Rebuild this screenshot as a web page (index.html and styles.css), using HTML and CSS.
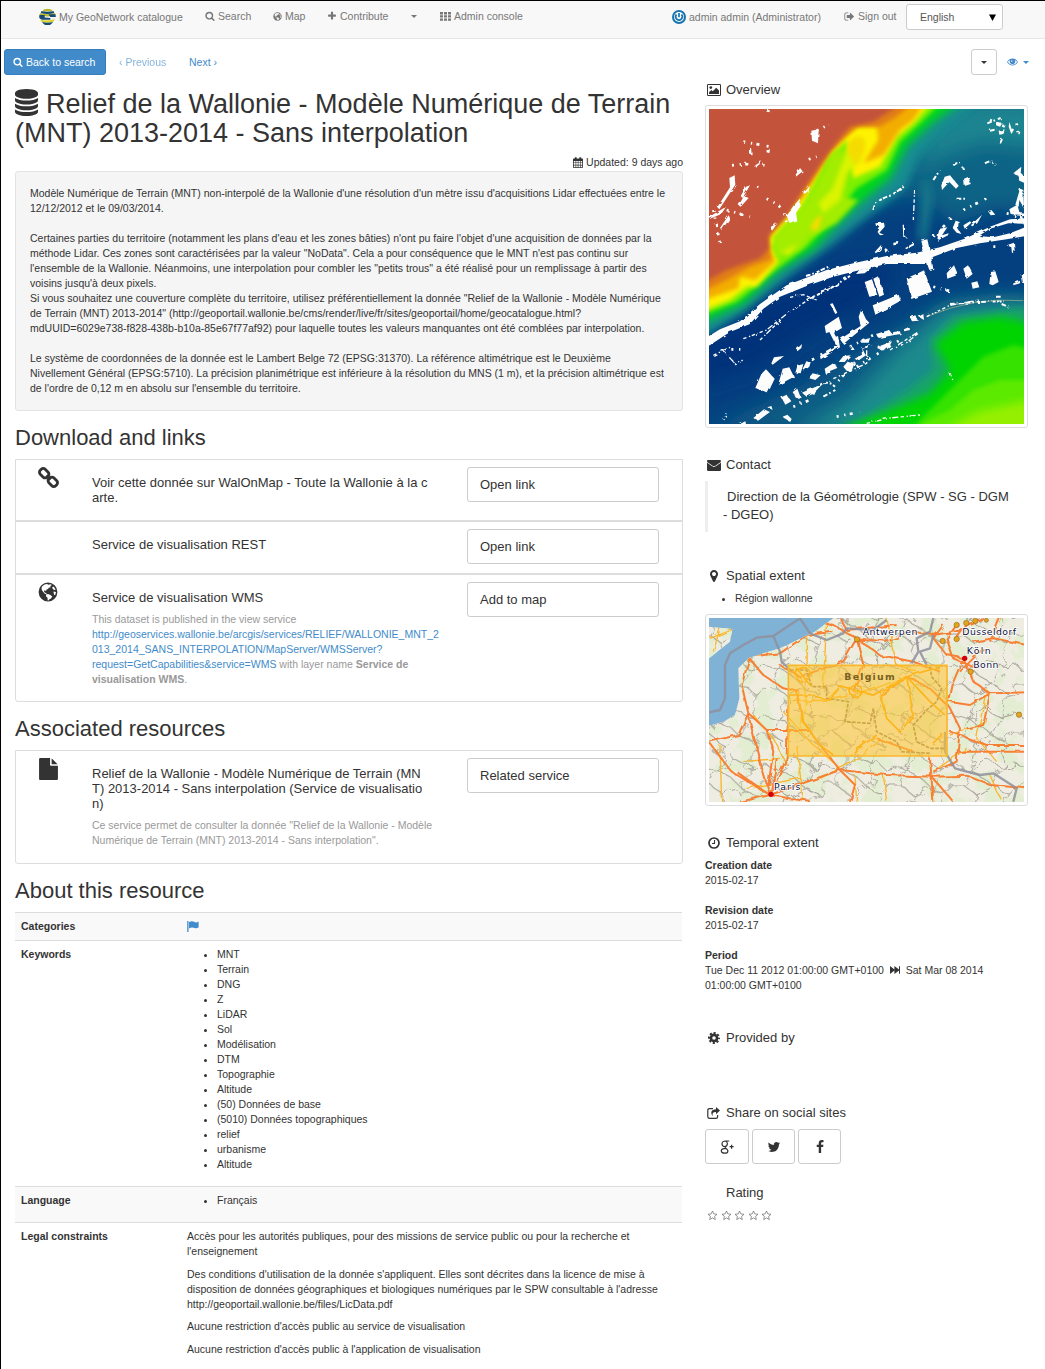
FILE: index.html
```html
<!DOCTYPE html>
<html lang="en">
<head>
<meta charset="utf-8">
<title>My GeoNetwork catalogue</title>
<link rel="stylesheet" href="styles.css">
</head>
<body>
<svg width="0" height="0" class="defs" aria-hidden="true">
  <symbol id="search" viewBox="0 0 1792 1792"><path d="M1216 832q0-185-131.500-316.500t-316.500-131.500-316.500 131.500-131.500 316.500 131.500 316.500 316.500 131.500 316.500-131.500 131.500-316.500zm512 832q0 52-38 90t-90 38q-54 0-90-38l-343-342q-179 124-399 124-143 0-273.500-55.500t-225-150-150-225-55.500-273.500 55.500-273.500 150-225 225-150 273.500-55.500 273.500 55.500 225 150 150 225 55.500 273.500q0 220-124 399l343 343q37 37 37 90z"/></symbol>
  <symbol id="plus" viewBox="0 0 1792 1792"><path d="M1600 736v192q0 40-28 68t-68 28h-416v416q0 40-28 68t-68 28h-192q-40 0-68-28t-28-68v-416h-416q-40 0-68-28t-28-68v-192q0-40 28-68t68-28h416v-416q0-40 28-68t68-28h192q40 0 68 28t28 68v416h416q40 0 68 28t28 68z"/></symbol>
  <symbol id="globe" viewBox="0 0 20 20"><path fill-rule="evenodd" d="M10 .6a9.400 9.400 0 1 0 0 18.800A9.400 9.400 0 0 0 10 .6zM9 2.100l1.500.6 2-.5 1.500.8-1.800 1 .5 1.300-2 .4-.6 1.400-1.600.3-.4 1.500-1.600-.6-.5 1.200 1 1.200 1.300.2.300 1.500 1.400-.3 2.400.8 1.900 1.500-1.300 2-1.600.9-1 1.300-.7-.2-.2-2.600-1.600-1.500.2-2-1.600-.9-2.200-2.600-.6-1.500C3.100 4.700 5.500 2.500 9 2.100zm6.600 2.300 2.100 3-1.500.5-1.300-.8-.8-1.500zm-.2 5.100 2.600.4-.7 2.900-1.200.2z"/></symbol>
  <symbol id="grid" viewBox="0 0 11 9"><path d="M0 0h3v2.400H0zM4 0h3v2.400H4zM8 0h3v2.400H8zM0 3.200h3v2.400H0zM4 3.200h3v2.400H4zM8 3.200h3v2.400H8zM0 6.400h3v2.400H0zM4 6.400h3v2.400H4zM8 6.400h3v2.400H8z"/></symbol>
  <symbol id="signout" viewBox="0 0 1792 1792"><path d="M704 1440q0 4 1 20t.5 26.500-3 23.500-10 19.500-20.500 6.500h-320q-119 0-203.500-84.500t-84.500-203.500v-704q0-119 84.500-203.500t203.500-84.500h320q13 0 22.500 9.500t9.500 22.500q0 4 1 20t.5 26.500-3 23.500-10 19.500-20.500 6.500h-320q-66 0-113 47t-47 113v704q0 66 47 113t113 47h312l11.500 1 11.500 3 8 5.500 7 9 2 13.500zm928-544q0 26-19 45l-544 544q-19 19-45 19t-45-19-19-45v-288h-448q-26 0-45-19t-19-45v-384q0-26 19-45t45-19h448v-288q0-26 19-45t45-19 45 19l544 544q19 19 19 45z"/></symbol>
  <symbol id="database" viewBox="128 0 1536 1792"><path d="M896 768q237 0 443-43t325-127v170q0 69-103 128t-280 93.500-385 34.500-385-34.500-280-93.500-103-128v-170q119 84 325 127t443 43zm0 768q237 0 443-43t325-127v170q0 69-103 128t-280 93.500-385 34.500-385-34.500-280-93.500-103-128v-170q119 84 325 127t443 43zm0-384q237 0 443-43t325-127v170q0 69-103 128t-280 93.500-385 34.500-385-34.500-280-93.500-103-128v-170q119 84 325 127t443 43zm0-1152q208 0 385 34.500t280 93.500 103 128v128q0 69-103 128t-280 93.500-385 34.500-385-34.500-280-93.500-103-128v-128q0-69 103-128t280-93.500 385-34.500z"/></symbol>
  <symbol id="file" viewBox="128 0 1536 1792"><path d="M1152 512v-472q22 14 36 28l408 408q14 14 28 36h-472zm-128 32q0 40 28 68t68 28h544v1056q0 40-28 68t-68 28h-1344q-40 0-68-28t-28-68v-1600q0-40 28-68t68-28h800v544z"/></symbol>
  <symbol id="chain" viewBox="0 0 20 20"><g fill="none" stroke="currentColor" stroke-width="2.700" stroke-linejoin="round"><rect x="-4.600" y="-3.300" width="9.200" height="6.600" rx="2.600" transform="translate(5.900 5.900) rotate(45)"/><rect x="-4.600" y="-3.300" width="9.200" height="6.600" rx="2.600" transform="translate(14.100 14.100) rotate(45)"/><path d="M8 8l4 4"/></g></symbol>
  <symbol id="twitter" viewBox="0 0 1792 1792"><path d="M1684 408q-67 98-162 167 1 14 1 42 0 130-38 259.500t-115.500 248.500-184.500 210.500-258 146-323 54.500q-271 0-496-145 35 4 78 4 225 0 401-138-105-2-188-64.500t-114-159.500q33 5 61 5 43 0 85-11-112-23-185.500-111.500t-73.500-205.500v-4q68 38 146 41-66-44-105-115t-39-154q0-88 44-163 121 149 294.500 238.500t371.500 99.500q-8-38-8-74 0-134 94.500-228.500t228.500-94.500q140 0 236 102 109-21 205-78-37 115-142 178 93-10 186-50z"/></symbol>
  <symbol id="facebook" viewBox="0 0 1792 1792"><path d="M1343 12v264h-157q-86 0-116 36t-30 108v189h293l-39 296h-254v759h-306v-759h-255v-296h255v-218q0-186 104-288.500t277-102.500q147 0 228 12z"/></symbol>
  <symbol id="gplus" viewBox="0 0 14 14"><g fill="none" stroke="currentColor" stroke-width="1.200"><path d="M9.200 1H5.600C3.500 1 2 2.100 2 3.900c0 1.500 1.100 2.600 2.700 2.600 1.700 0 2.700-1.100 2.700-2.700 0-1.500-.9-2.500-1.900-2.800M5.300 6.500c-.6.900-.1 1.400.8 2 1.100.7 1.800 1.300 1.800 2.400 0 1.400-1.300 2.300-3.200 2.300S1.300 12.400 1.300 11c0-1.600 1.800-2.600 4.600-2.600M9.600 6.700h4M11.600 4.700v4"/></g></symbol>
  <symbol id="marker" viewBox="384 128 1024 1536"><path d="M1152 640q0-106-75-181t-181-75-181 75-75 181 75 181 181 75 181-75 75-181zm256 0q0 109-33 179l-364 774q-16 33-47.500 52t-67.500 19-67.500-19-46.500-52l-365-774q-33-70-33-179 0-212 150-362t362-150 362 150 150 362z"/></symbol>
  <symbol id="image" viewBox="0 0 14 12"><path fill-rule="evenodd" d="M1.200 0h11.600Q14 0 14 1.200v9.600Q14 12 12.800 12H1.200Q0 12 0 10.800V1.200Q0 0 1.200 0zM1 1v10h12V1z"/><circle cx="3.800" cy="3.600" r="1.400"/><path d="M2 10V8.200l2.400-2.300 1.400 1.300L9.200 3.800 12 6.500V10z"/></symbol>
  <symbol id="envelope" viewBox="0 0 14 11"><path d="M0 2.600c1.400 1.300 3.400 2.400 4.800 3.500 1.500 1.100 2.900 1.100 4.400 0C10.600 5 12.600 3.900 14 2.600V9.800Q14 11 12.800 11H1.200Q0 11 0 9.800z"/><path d="M1.200 0h11.600Q14 0 14 1c0 1-1.400 1.900-2.400 2.600L8.800 5.400Q7 6.700 5.200 5.400L2.400 3.600C1.400 2.900 0 2 0 1 0 .3.400 0 1.200 0z"/></symbol>
  <symbol id="clock" viewBox="0 0 12 12"><g fill="none" stroke="currentColor"><circle cx="6" cy="6" r="5" stroke-width="1.700"/><path d="M6.500 3v3.500H4" stroke-width="1.100"/></g></symbol>
  <symbol id="cog" viewBox="0 0 12 12"><circle cx="6" cy="6" r="3.100" fill="none" stroke="currentColor" stroke-width="2.600"/><circle cx="6" cy="6" r="4.900" fill="none" stroke="currentColor" stroke-width="2.200" stroke-dasharray="2.050 1.798" stroke-dashoffset="1.020"/></symbol>
  <symbol id="share" viewBox="0 0 13 12"><path fill="none" stroke="currentColor" stroke-width="1.200" d="M6 1.600H2.500Q.8 1.600.8 3.300v6.400q0 1.700 1.700 1.700h6.400q1.700 0 1.700-1.700V8"/><path d="M9 0l4 3.600-4 3.600V5.100C6 5 5 6 5.800 9 3 6 4.200 2.200 9 2.200z"/></symbol>
  <symbol id="flag" viewBox="0 0 12 11"><path d="M.2 0h1.300v11H.2z"/><path d="M2 1.300c2.800-1.600 4-.9 5.600-.2 1.400.6 2.500.2 4-.6v6c-1.500.8-2.700 1.100-4.100.5C5.900 6.200 4.600 6 2 7.500z"/></symbol>
  <symbol id="ff" viewBox="0 0 10 8"><path d="M0 0l4.400 3.400V0L9 3.500V.3h1v7.400H9V4.500L4.400 8V4.600L0 8z"/></symbol>
  <symbol id="calendar" viewBox="0 0 10 11"><path fill-rule="evenodd" d="M.8 1.400h1V.2h1.800v1.200h2.800V.2h1.800v1.200h1q.8 0 .8.800v8q0 .8-.8.800H.8q-.8 0-.8-.8v-8q0-.8.800-.8zM.8 3.900v1.600h1.800V3.900zm2.400 0v1.600h1.600V3.900zm2.200 0v1.600H7V3.900zm2.200 0v1.600h1.600V3.900zM.8 6.100v1.700h1.800V6.100zm2.400 0v1.700h1.600V6.100zm2.200 0v1.700H7V6.100zm2.200 0v1.700h1.600V6.100zM.8 8.400v1.800h1.800V8.400zm2.400 0v1.800h1.600V8.400zm2.200 0v1.800H7V8.400zm2.200 0v1.800h1.600V8.400z"/></symbol>
  <symbol id="eye" viewBox="0 0 12 8"><path fill-rule="evenodd" d="M0 4Q2.400.2 6 .2T12 4Q9.600 7.800 6 7.800T0 4zm.9 0Q3 7 6 7t5.100-3Q10.400 2.700 8.600 1.700a3 3 0 1 1-5.200 0Q1.600 2.700.9 4z"/><circle cx="6" cy="3.700" r="2.400"/><circle cx="5.300" cy="2.800" r=".8" fill="#fff"/></symbol>
  <symbol id="star" viewBox="0 0 11 11"><path fill="none" stroke="currentColor" stroke-width=".8" d="M5.500 1l1.300 2.900 3.200.4-2.400 2.100.7 3.200-2.800-1.700-2.800 1.700.7-3.200L1 4.300l3.200-.4z"/></symbol>
</svg>

<header class="navbar">
  <a class="nav brand"><svg class="logo" viewBox="0 0 18 18"><clipPath id="lc"><circle cx="9" cy="9" r="8.800"/></clipPath><g clip-path="url(#lc)"><path fill="#f4f4f4" d="M0 0h18v18H0z"/><path fill="#b8b82c" d="M5 0h9v3H4zM0 4.500q9 3 18 0V7q-9 3-18 0z"/><path fill="#174a72" d="M2 2.700q7 1.500 14 0v2.100q-7 2-14 0zM0 7h6v2.500l6 .5v2H3L0 10zM10 6h8v3h-6z"/><path fill="#d7cf25" d="M1 12q8 2 16-1l-2 3q-6 2-12 0z"/><path fill="#174a72" d="M3 14.300q6 1.700 12 0l-3 3.200H6z"/></g></svg>My GeoNetwork catalogue</a>
  <a class="nav n-search"><svg class="i10"><use href="#search"/></svg>Search</a>
  <a class="nav n-map"><svg class="i9"><use href="#globe"/></svg>Map</a>
  <a class="nav n-contribute"><svg class="i10"><use href="#plus"/></svg>Contribute</a>
  <a class="nav n-caret"><span class="caret"></span></a>
  <a class="nav n-admin"><svg class="gridicon"><use href="#grid"/></svg>Admin console</a>
  <a class="nav n-user"><svg class="avatar" viewBox="0 0 14 14"><circle cx="7" cy="7" r="7" fill="#1773b0"/><circle cx="7" cy="7" r="5" fill="#fff"/><path d="M4.500 4.500a3.300 3.300 0 1 0 5 0M7 3v4.200" fill="none" stroke="#1773b0" stroke-width="1.700"/></svg>admin admin (Administrator)</a>
  <a class="nav n-out"><svg class="i11"><use href="#signout"/></svg>Sign out</a>
  <div class="lang"><span>English</span><svg class="arrow" viewBox="0 0 7 7"><path d="M0 .5h7L3.500 7z"/></svg></div>
</header>

<div class="toolbar">
  <a class="btn-primary"><svg class="i10"><use href="#search"/></svg>Back to search</a>
  <a class="prev">‹ Previous</a>
  <a class="next">Next ›</a>
  <span class="btn-drop"><span class="caret"></span></span>
  <a class="view"><svg class="eye"><use href="#eye"/></svg><span class="caret"></span></a>
</div>

<div class="page">
<main>
  <h1><svg class="db"><use href="#database"/></svg>Relief de la Wallonie - Modèle Numérique de Terrain<br>(MNT) 2013-2014 - Sans interpolation</h1>
  <p class="updated"><svg class="cal"><use href="#calendar"/></svg>Updated: 9 days ago</p>
  <div class="well">Modèle Numérique de Terrain (MNT) non-interpolé de la Wallonie d'une résolution d'un mètre issu d'acquisitions Lidar effectuées entre le<br>12/12/2012 et le 09/03/2014.<br><br>Certaines parties du territoire (notamment les plans d'eau et les zones bâties) n'ont pu faire l'objet d'une acquisition de données par la<br>méthode Lidar. Ces zones sont caractérisées par la valeur "NoData". Cela a pour conséquence que le MNT n'est pas continu sur<br>l'ensemble de la Wallonie. Néanmoins, une interpolation pour combler les "petits trous" a été réalisé pour un remplissage à partir des<br>voisins jusqu'à deux pixels.<br>Si vous souhaitez une couverture complète du territoire, utilisez préférentiellement la donnée "Relief de la Wallonie - Modèle Numérique<br>de Terrain (MNT) 2013-2014" (http://geoportail.wallonie.be/cms/render/live/fr/sites/geoportail/home/geocatalogue.html?<br>mdUUID=6029e738-f828-438b-b10a-85e67f77af92) pour laquelle toutes les valeurs manquantes ont été comblées par interpolation.<br><br>Le système de coordonnées de la donnée est le Lambert Belge 72 (EPSG:31370). La référence altimétrique est le Deuxième<br>Nivellement Général (EPSG:5710). La précision planimétrique est inférieure à la résolution du MNS (1 m), et la précision altimétrique est<br>de l'ordre de 0,12 m en absolu sur l'ensemble du territoire.</div>

  <h2>Download and links</h2>
  <div class="list">
    <div class="item r1">
      <div class="ico"><svg class="chain"><use href="#chain"/></svg></div>
      <div class="desc"><h4>Voir cette donnée sur WalOnMap - Toute la Wallonie à la c<br>arte.</h4></div>
      <div class="act">Open link</div>
    </div>
    <div class="item r2">
      <div class="ico"></div>
      <div class="desc"><h4>Service de visualisation REST</h4></div>
      <div class="act">Open link</div>
    </div>
    <div class="item r3">
      <div class="ico"><svg class="bigglobe"><use href="#globe"/></svg></div>
      <div class="desc"><h4>Service de visualisation WMS</h4>
        <p>This dataset is published in the view service<br><a>http://geoservices.wallonie.be/arcgis/services/RELIEF/WALLONIE_MNT_2<br>013_2014_SANS_INTERPOLATION/MapServer/WMSServer?<br>request=GetCapabilities&amp;service=WMS</a> with layer name <b>Service de<br>visualisation WMS</b>.</p></div>
      <div class="act">Add to map</div>
    </div>
  </div>

  <h2>Associated resources</h2>
  <div class="list">
    <div class="item r4">
      <div class="ico"><svg class="fileicon"><use href="#file"/></svg></div>
      <div class="desc"><h4>Relief de la Wallonie - Modèle Numérique de Terrain (MN<br>T) 2013-2014 - Sans interpolation (Service de visualisatio<br>n)</h4>
        <p>Ce service permet de consulter la donnée "Relief de la Wallonie - Modèle<br>Numérique de Terrain (MNT) 2013-2014 - Sans interpolation".</p></div>
      <div class="act">Related service</div>
    </div>
  </div>

  <h2>About this resource</h2>
  <table>
    <tr class="odd"><th>Categories</th><td><svg class="flag"><use href="#flag"/></svg></td></tr>
    <tr><th>Keywords</th><td><ul><li>MNT</li><li>Terrain</li><li>DNG</li><li>Z</li><li>LiDAR</li><li>Sol</li><li>Modélisation</li><li>DTM</li><li>Topographie</li><li>Altitude</li><li>(50) Données de base</li><li>(5010) Données topographiques</li><li>relief</li><li>urbanisme</li><li>Altitude</li></ul></td></tr>
    <tr class="odd"><th>Language</th><td><ul><li>Français</li></ul></td></tr>
    <tr><th>Legal constraints</th><td><p>Accès pour les autorités publiques, pour des missions de service public ou pour la recherche et<br>l'enseignement</p><p>Des conditions d'utilisation de la donnée s'appliquent. Elles sont décrites dans la licence de mise à<br>disposition de données géographiques et biologiques numériques par le SPW consultable à l'adresse<br>http://geoportail.wallonie.be/files/LicData.pdf</p><p>Aucune restriction d'accès public au service de visualisation</p><p>Aucune restriction d'accès public à l'application de visualisation</p></td></tr>
  </table>
</main>

<aside>
  <h3><span class="fw"><svg class="s-image"><use href="#image"/></svg></span>Overview</h3>
  <div class="thumb">
    <svg class="terrain" viewBox="27 27 945 945" preserveAspectRatio="none">
      <defs>
        <filter id="b30" x="-30%" y="-30%" width="160%" height="160%"><feGaussianBlur stdDeviation="30"/></filter>
        <filter id="b12" x="-30%" y="-30%" width="160%" height="160%"><feGaussianBlur stdDeviation="12"/></filter>
        <filter id="b6" x="-30%" y="-30%" width="160%" height="160%"><feGaussianBlur stdDeviation="6"/></filter>
        <filter id="rough" x="-5%" y="-5%" width="110%" height="110%"><feTurbulence type="fractalNoise" baseFrequency=".05" numOctaves="2" seed="4"/><feDisplacementMap in="SourceGraphic" scale="9"/></filter>
      </defs>
      <path fill="#044080" d="M0 0h1000v1000H0z"/>
      <path fill="#02307a" filter="url(#b30)" d="M0 700L200 590 420 510 600 490 520 600 330 700 180 800 0 860z"/>
      <path fill="#0d6385" filter="url(#b30)" d="M480 320L620 230 740 0H1020V350L900 320 760 370 650 280 560 310z"/>
      <path fill="#1b8490" filter="url(#b30)" d="M620 220L720 60 800 0H1020V150L860 130 760 160z"/>
      <path fill="#17768a" filter="url(#b12)" d="M665 240L690 240 700 300 680 420 655 420z"/>
      <path fill="#0e5c84" filter="url(#b30)" d="M0 1000L380 820 560 700 740 600 900 580 1000 590V1000z"/>
      <path fill="#1b8b8d" filter="url(#b30)" d="M330 970L450 900 600 740 740 620 1000 600V1000H250z"/>
      <path fill="#12a467" filter="url(#b12)" d="M480 960L620 870 700 810 690 720 760 650 980 620V1000H420z"/>
      <path fill="#06d405" filter="url(#b12)" d="M410 990L560 935 690 880 750 810 705 730 790 665 900 650 990 670V1000z"/>
      <path fill="#35e203" filter="url(#b6)" d="M650 970L780 840 850 770 940 735 1000 750V1000z"/>
      <path fill="#5bea02" filter="url(#b6)" d="M600 1000L750 930 820 870 900 840 1000 840V1000z"/>
      <path fill="#94f000" filter="url(#b12)" d="M720 1000L830 935 990 900V1000z"/>
      <path fill="#168d91" filter="url(#b12)" d="M0 720L130 640 280 520 390 440 480 370 620 260 660 170 740 90 850 0H0z"/>
      <path fill="#04d51c" filter="url(#b12)" d="M0 672L130 612 240 510 340 450 400 385 480 310 570 235 620 140 690 75 790 0H0z"/>
      <path fill="#7cf000" filter="url(#b6)" d="M0 648L110 605 230 508 320 440 390 365 470 265 560 210 600 125 660 70 730 0H0z"/>
      <path fill="#fdf300" filter="url(#b6)" d="M0 636L90 600 140 560 170 560 235 485 215 440 250 380 300 330 380 180 440 120 460 235 540 200 590 110 640 70 700 0H0z"/>
      <path fill="#f3ad00" filter="url(#b6)" d="M0 605L115 565 120 530 165 540 225 485 205 440 205 400 310 290 370 180 430 110 480 76 530 78 535 120 490 190 550 165 600 90 640 60 680 0H0z"/>
      <path fill="#e17e18" filter="url(#b6)" d="M0 580L90 535 150 500 215 478 203 420 270 330 330 250 400 145 470 80 540 80 590 50 650 0H0z"/>
      <path fill="#c3533a" filter="url(#b6)" d="M0 555L80 510 180 475 208 445 206 405 260 350 310 270 370 180 420 115 450 80 520 65 590 20H0z"/>
      <path fill="#a2ed00" filter="url(#b6)" d="M398 155L445 150 445 225 430 290 475 300 410 370 330 410 295 450 228 472 218 410 285 350 330 290 370 215z"/>
      <path fill="#d9f400" filter="url(#b6)" d="M445 145L485 180 440 220 420 300 370 340 355 310 395 270 415 220zM245 455l50-25-30 35z"/>
      <path fill="#f5dc00" filter="url(#b6)" d="M440 150q10-50 50-38 20 40-25 85zM330 390q10-40 38-44l-15 45z"/>
      <path fill="none" stroke="#d8cf8a" stroke-width="3" opacity=".5" d="M680 650Q820 590 970 602"/>
      <g filter="url(#rough)">
        <path fill="#fdfdfd" fill-rule="evenodd" d="M20 712L60 688 120 664 180 612 260 556 380 510 460 490 560 468 650 458 720 442 800 414 870 380 930 358 980 355V408L920 418 840 430 770 444 700 470 680 492 560 492 480 510 400 530 320 558 240 590 190 626 150 672 90 696 20 742zM836 408L880 412 930 400 975 382 970 371 925 370 870 386z"/>
        <path fill="#fdfdfd" d="M664 422l18-4 8 36 10 52-12 4-14-40zM620 535l40-18 12-6 24 64-62 22zM494 546l22-8 16 48-24 4zM520 536l16-8 16 56-14 6zM518 616l78-32 6 18-76 42zM374 678l42-28 10 34-24 14 16 34-10 4-20-40-10 4zM484 628l14 30 10 10-78 64-10-14 62-40-6-28zM360 768l52-30-8-26 10-4 6 34-58 36zM390 612l8-2 14 28-6 4zM184 822l14-14 26 28-20 42-38-14zM234 856l14-50 20-4 14 28zM214 790l8-18 30-4-34 26zM286 818l6-20 18-6-8 28zM308 806l10-20 14 0-4 14-16 12zM290 748l16-16-2 12-12 10zM326 834l12-14 24 6-16 14zM374 806l28-18 10 16-24 10-10 12zM416 786l14-18 22-2-18 20zM430 800l14-16 20 4-10 28-14-4zM464 776l22-12-2-22 34-8-32 14 12 18-24 16zM452 750l6-10 6 10zM244 892l16-8 14 20-18 10zM278 876l14-10 10 26-14 2zM306 878l18-8 44-18-30 30-18 8zM160 954l32-26 18 8-36 26zM202 922l12-4 4 12zM248 950l14-6 14 14-10 4-14-8zM120 972l16-8 2 8zM630 652l16-6 10 16-20 2zM656 650l14-8 2 18zM612 688l16-8 2 10-18 4zM580 696l20-2 2 8-24 4zM540 738l36-14-6 12-24 16-14-8 2-8 10 6zM528 702l40-12 12 16-44 8zM480 722l30-8-4 14-22 0z"/>
        <path fill="#fdfdfd" d="M724 256l10-26 16-4 26 32-8 8-20-20-22 24zM792 236l14-6 6 22-18 6zM334 92l22-4-2 42-18-8zM280 318l20-22 2 22-14 20 4 26-20 8-12-24zM210 382l22-12-16 22zM90 262l-2-28 16-8 2 28-48 74-6-6zM162 194l20-14-4 14-14 6zM116 316l16-28 14 6-24 26zM286 226l14-22 8 10-22 18zM310 276l16-22-4 22-10 6zM122 288l16-28 12-4-22 38zM150 148l6-2 2 20-10-2zM198 156l12-10-2 14zM60 384l26-38 4 8-24 36zM28 350l50-30-14 22-34 14zM740 520l22-24 12 28-32 12zM790 506l14-10 14 26-18 14zM814 548l18-4 6 18-20 4zM868 552l4-36 14-2 10 32-18 10zM940 550l20-8 0 8-20 6zM962 522l10 0v26h-6zM920 436l22-8 2 26-8 6-2-18zM758 384l10-24 8 4-2 22 10 16-14-4zM790 376l20-12 4 4-20 18zM720 386l22-4-16 24 20-6-2 6-32 16 2-20zM814 374l32-30-14 26-18 10zM864 334l10-4 12 14-14 2zM928 328l24-14 6 22 14 2 0 8-40-4zM946 314l14-48 10 4 2 54-14-24-2 20zM940 220l24-20-2 18 10 10v20l-14-6-6-18zM888 66l20 2-8 12-12-4zM896 92l18-4-4 14-12 2zM928 66l10 30-4 6-8-22zM526 370l26-2 2 12-16 18 14 6-12 2-10-14 8-14-10 0zM608 374l4 0 0 32 12 10-14-4zM524 456l20-22-2 14-14 12zM552 440l12 10-8 8zM580 428l18-2-2 8-16 2zM616 444l26-16 0 8-24 12zM478 510l40-10-24 20-26 2z"/>
        <g fill="none" stroke="#fdfdfd">
          <path stroke-width="6" stroke-dasharray="14 6 5 9 9 4" d="M318 528L348 518 390 498M320 600L380 572 450 528M340 884q20-50 60-30M370 890l36-20M520 330q4-30 54-44L612 260M700 240L720 210M760 196q20-20 30 14M855 190q20-14 32 6M770 296l28 0M862 70l40-16M870 92l20-4M900 130l8-16M750 612L830 606 912 604M905 612l26 12M888 590l20 0"/>
          <path stroke-width="4" stroke-dasharray="10 8 4 5 18 7" d="M130 716L200 690 262 640 340 590 420 550M180 720L242 660M70 752L110 796 128 780M40 766L90 742M270 592L310 584 350 600M400 836L500 790 500 740M570 750L655 696M605 740L655 700M680 650L750 616 840 600M500 970L570 954 660 945M640 360l4-90M78 940l-6 20M750 820l10 24"/>
          <path stroke-width="8" stroke-dasharray="6 17 4 13 9 22" d="M96 196L130 192 200 196M130 125L210 140 200 160M40 330L60 430M200 296L230 312 250 330 262 376M80 330l70 20M200 30l20 10M350 92l36-18M326 178l24-8M170 258l12 16M450 740L530 700M470 800L600 720M400 860L480 770M300 800L370 760M870 60L960 100M700 410L760 350M790 330L870 290M950 70l4 30M920 340l50 14M700 560l60 16M880 440l16 0M280 920l50-20M600 270l10-10M94 748l30 0M410 950l70-14"/>
        </g>
      </g>
    </svg>
  </div>

  <h3 class="g29"><span class="fw"><svg class="s-env"><use href="#envelope"/></svg></span>Contact</h3>
  <blockquote><span class="first">Direction de la Géométrologie (SPW - SG - DGM</span><br>- DGEO)</blockquote>

  <h3 class="g36"><span class="fw"><svg class="s-marker"><use href="#marker"/></svg></span>Spatial extent</h3>
  <ul class="extent"><li>Région wallonne</li></ul>
  <div class="thumb">
    <svg class="osm" viewBox="27 39 945 552" preserveAspectRatio="none">
      <defs>
        <pattern id="minor" width="190" height="150" patternUnits="userSpaceOnUse"><path fill="none" stroke="#aaa79b" stroke-width="3.200" d="M0 30L50 45 95 10 150 40 190 30M50 45L30 90 70 120 60 150M70 120L120 95 150 40M120 95L165 115 190 90M0 90L30 90M165 115L150 150M95 10L100 0M60 0L50 45M95 70L120 95M95 70L50 45M150 0L150 40"/></pattern>
        <filter id="wig" x="0" y="0" width="100%" height="100%"><feTurbulence type="fractalNoise" baseFrequency=".022" numOctaves="3" seed="8"/><feDisplacementMap in="SourceGraphic" scale="55"/></filter>
        <filter id="wig2" x="-5%" y="-5%" width="110%" height="110%"><feTurbulence type="fractalNoise" baseFrequency=".03" numOctaves="2" seed="3"/><feDisplacementMap in="SourceGraphic" scale="16"/></filter>
        <filter id="forest" x="0" y="0" width="100%" height="100%"><feTurbulence type="fractalNoise" baseFrequency=".018" numOctaves="5" seed="12"/><feColorMatrix values="0 0 0 0 .76  0 0 0 0 .85  0 0 0 0 .64  0 9 0 0 -4.400"/></filter>
        <clipPath id="land"><path d="M400 39L345 80 240 130 148 158 115 190 118 280 105 330 70 350 27 362V600H980V39zM27 39V65L97 72 90 110 27 160z"/></clipPath>
      </defs>
      <path fill="#7fb2d5" d="M0 0h1000v600H0z"/>
      <g clip-path="url(#land)">
        <path fill="#efede2" d="M0 0h1000v600H0z"/>
        <rect x="0" y="0" width="1000" height="620" filter="url(#forest)"/>
        <g filter="url(#wig)"><path fill="url(#minor)" d="M-50-50h1100v700H-50z"/></g>
        <g filter="url(#wig2)" fill="none" stroke-linejoin="round">
          <path stroke="#fbb62e" stroke-width="4" d="M30 100L95 75M40 140L60 70M230 60L235 130M320 60L318 180M370 250L380 40M360 520L460 470 540 400M60 420L65 590M130 470L240 460M140 550L300 520M470 590L465 510M550 510L560 590M860 250L830 400 890 470M750 390L860 350M560 39L590 180 650 200M250 320L330 410 420 490M700 500L800 430M310 590L290 420M160 330L220 400 260 480M900 580L870 510M270 290L390 285 500 260 620 215"/>
          <path stroke="#f78034" stroke-width="6" d="M148 155L240 145 320 90 400 80M148 160L190 210 250 250 300 260M148 160L125 240 145 325 200 375 330 375M200 375L220 440 205 540M145 325L115 390 27 410M27 410L60 455 95 500 210 570M210 570L420 495 560 510 700 515 800 512 870 540 980 550M210 570L180 470 145 330M420 495L360 420 310 350 290 260M420 495L465 540 450 590M210 570L110 500M210 570L260 460 265 300M210 570L225 500 230 460M210 570L120 590M210 570L330 590M690 460L700 590M690 510L760 590M470 100L400 60 330 39M470 100L430 170 300 215 240 180M470 100L560 110 640 80 700 90 790 75M470 100L490 180 460 260M470 100L540 150 640 170 720 200M790 160L740 150 700 100 730 60M790 160L820 230 870 265 980 262M790 160L760 230 745 300 780 370 770 470 700 500M870 265L810 300 745 290M870 265L850 360 800 370M770 100L800 60 850 39M770 60L740 100 760 160 830 190M820 110L880 100 980 120M780 200L850 130M620 215L560 260 540 270M420 39L440 75 590 60M900 39L870 110M750 380L860 420 980 420M770 440L980 440M620 215L690 250 740 300M530 400L640 440"/>
          <path stroke="#f6c93c" stroke-width="4" d="M380 285L420 245 520 270 620 215M300 200L320 300 300 370"/>
        </g>
      </g>
      <g fill="none" stroke="#8f8f9b" stroke-width="7" stroke-linejoin="round" opacity=".85"><path d="M27 322L60 315 75 280 75 180 90 145 130 120 170 98 220 93 300 40M220 93L240 140 245 170 270 195M300 40L330 85 380 105 430 85 440 70 520 75 560 45M700 39L690 80 650 100 655 140 635 175M700 90L690 130 660 140 680 180M735 380L735 440 765 490 800 500 840 510 880 505 950 550 940 590"/></g>
      <path fill="none" stroke="#8e7f62" stroke-width="5" stroke-dasharray="11 4" d="M270 195L320 195 335 245 380 245 380 280 445 290 435 350 510 355 520 310 530 380 590 410 605 440 690 445M690 185L695 215 725 250 710 290 680 315 640 360 650 410 690 430 735 430"/>
      <path fill="#ffc42e" fill-opacity=".56" stroke="#fbb72b" stroke-width="5" d="M265 181H741V453H265z"/>
      <g fill="none" stroke="#fdb51f" stroke-width="5" filter="url(#wig2)"><path d="M268 270L330 270 390 285 420 245 520 270 620 215 720 185M330 240L290 190M620 215L690 290 735 330M620 215L540 270 560 340 600 380 640 330 620 215M310 350L360 420 400 450M310 350L290 260M530 390L450 450M700 420L730 390"/><circle cx="468" cy="258" r="18"/><circle cx="310" cy="210" r="22"/></g>
      <g fill="#e5a51b" stroke="#956b20" stroke-width="2"><circle cx="471" cy="103" r="8"/><circle cx="770" cy="60" r="8"/><circle cx="799" cy="54" r="8"/><circle cx="826" cy="48" r="8"/><circle cx="859" cy="46" r="6"/><circle cx="770" cy="102" r="8"/><circle cx="728" cy="108" r="8"/><circle cx="812" cy="200" r="8"/><circle cx="957" cy="329" r="8"/></g>
      <circle cx="794" cy="160" r="8" fill="#d40008"/><circle cx="213" cy="568" r="8" fill="#d40008"/>
      <g class="place"><text x="488" y="91" textLength="164">Antwerpen</text><text x="787" y="91" textLength="161">Düsseldorf</text><text x="800" y="148" textLength="72">Köln</text><text x="820" y="190" textLength="75">Bonn</text><text x="222" y="556" textLength="79">Paris</text><text class="country" x="433" y="224" textLength="151">Belgium</text></g>
    </svg>
  </div>

  <h3 class="g29"><span class="fw"><svg class="s-12"><use href="#clock"/></svg></span>Temporal extent</h3>
  <div class="dates"><b>Creation date</b><br>2015-02-17<br><br><b>Revision date</b><br>2015-02-17<br><br><b>Period</b><br>Tue Dec 11 2012 01:00:00 GMT+0100 <svg class="ff"><use href="#ff"/></svg> Sat Mar 08 2014<br>01:00:00 GMT+0100</div>

  <h3 class="g37"><span class="fw"><svg class="s-12"><use href="#cog"/></svg></span>Provided by</h3>
  <h3 class="g59"><span class="fw"><svg class="s-share"><use href="#share"/></svg></span>Share on social sites</h3>
  <div class="social"><span class="b1"><svg class="s-14"><use href="#gplus"/></svg></span><span class="b2"><svg class="s-14"><use href="#twitter"/></svg></span><span class="b3"><svg class="s-14"><use href="#facebook"/></svg></span></div>
  <h3 class="g21"><span class="fw"></span>Rating</h3>
  <div class="stars"><svg><use href="#star"/></svg><svg><use href="#star"/></svg><svg><use href="#star"/></svg><svg><use href="#star"/></svg><svg><use href="#star"/></svg></div>
</aside>
</div>
</body>
</html>
```
FILE: styles.css
```css
* { box-sizing: border-box; }
body {
  margin: 0;
  height: 1369px;
  overflow: hidden;
  border-left: 1px solid #000;
  border-top: 1px solid #000;
  background: #fff;
  color: #333;
  font: 10.5px/15px "Liberation Sans", Arial, sans-serif;
  white-space: nowrap;
}
svg { fill: currentColor; flex: none; }
.defs { position: absolute; }
h1, h2, h3, h4, p, ul, blockquote { margin: 0; padding: 0; font-weight: normal; }
a { color: #428bca; }

.caret { display: inline-block; border: 3px solid transparent; border-top-color: currentColor; border-bottom: 0; }
.i9 { width: 9px; height: 9px; margin-right: 3px; }
.i10 { width: 10px; height: 10px; margin-right: 3px; }
.i11 { width: 11px; height: 11px; margin-right: 3px; }

.navbar { display: flex; height: 38px; padding-left: 38px; background: #f8f8f8; border-bottom: 1px solid #e7e7e7; }
.nav { display: flex; align-items: center; height: 30px; color: #777; }
.brand { width: 166px; height: 32px; }
.logo { width: 17px; height: 18px; margin-right: 3px; }
.n-search { width: 68px; }
.n-map { width: 54px; }
.n-contribute { width: 84px; }
.n-caret { width: 29px; }
.gridicon { width: 11px; height: 9px; margin-right: 3px; }
.n-admin { width: 232px; }
.n-user { width: 172px; height: 32px; }
.avatar { width: 14px; height: 14px; margin-right: 3px; }
.n-out { width: 62px; }
.lang { display: flex; align-items: center; justify-content: space-between; width: 97px; height: 26px; margin-top: 3px; padding: 0 6px 0 13px; border: 1px solid #ccc; border-radius: 3px; background: #fff; color: #555; }
.arrow { width: 7px; height: 7px; color: #000; }

.toolbar { display: flex; align-items: center; height: 26px; margin-top: 10px; padding-left: 3px; }
.btn-primary { display: flex; align-items: center; width: 102px; height: 26px; padding-left: 8px; border: 1px solid #357ebd; border-radius: 3px; background: #428bca; color: #fff; }
.prev { margin-left: 13px; width: 70px; opacity: .65; }
.next { width: 782px; }
.btn-drop { display: flex; align-items: center; justify-content: center; width: 26px; height: 26px; border: 1px solid #ccc; border-radius: 3px; }
.view { display: flex; align-items: center; margin-left: 10px; }
.eye { width: 11px; height: 8px; margin-right: 5px; }

.page { display: flex; align-items: flex-start; }
main { width: 668px; margin-left: 14px; padding-top: 14px; }
h1 { height: 58px; font-size: 27px; line-height: 29px; }
.db { width: 23px; height: 27px; margin-right: 8px; vertical-align: -3px; }
.updated { display: flex; align-items: center; justify-content: flex-end; height: 15px; margin-top: 8px; }
.cal { width: 10px; height: 11px; margin-right: 3px; }
.well { height: 240px; margin-top: 15px; margin-top: 1px; padding: 14px; border: 1px solid #e3e3e3; border-radius: 3px; background: #f5f5f5; }
h2 { height: 48px; padding-top: 15px; font-size: 22px; line-height: 24px; }

.list { border: 1px solid #ddd; border-radius: 0 0 3px 3px; }
.item { display: flex; align-items: flex-start; }
.item + .item { border-top: 2px solid #ddd; }
.r1 { height: 60px; }
.r2 { height: 53px; }
.r3 { height: 128px; }
.r4 { height: 112px; }
.ico { width: 76px; padding: 7px 0 0 22px; }
.ico svg { display: block; }
.chain { width: 21px; height: 21px; }
.bigglobe { width: 20px; height: 20px; }
.fileicon { width: 19px; height: 22px; margin-left: 1px; }
.desc { width: 375px; padding-top: 15px; }
h4 { font-size: 13px; line-height: 15px; }
.desc p { margin-top: 7px; color: #999; }
.act { width: 192px; height: 35px; margin-top: 7px; padding-left: 12px; border: 1px solid #ccc; border-radius: 3px; font-size: 13px; line-height: 33px; }

table { width: 667px; border-collapse: separate; border-spacing: 0; table-layout: fixed; }
th, td { padding: 6px 6px; border-top: 1px solid #ddd; text-align: left; vertical-align: top; }
th { width: 166px; font-weight: bold; }
.odd th, .odd td { background: #f9f9f9; }
.flag { display: block; width: 12px; height: 11px; margin: 2px 0; color: #428bca; }
td ul { margin-bottom: 8px; padding-left: 30px; }
td p { margin-bottom: 7.500px; }

aside { width: 323px; margin-left: 22px; padding-top: 7px; }
h3 { display: flex; align-items: center; height: 16px; font-size: 13px; line-height: 16px; }
.fw { display: flex; justify-content: center; width: 17px; margin-right: 4px; }
.g21 { margin-top: 21px; }
.g29 { margin-top: 29px; }
.g36 { margin-top: 36px; }
.g37 { margin-top: 37px; }
.g59 { margin-top: 59px; }
.s-image { width: 14px; height: 12px; }
.s-env { width: 14px; height: 11px; }
.s-marker { width: 8px; height: 12px; }
.s-12 { width: 12px; height: 12px; }
.s-14 { width: 14px; height: 14px; }
.s-share { width: 13px; height: 12px; }
.thumb { margin-top: 7px; padding: 3px; border: 1px solid #ddd; border-radius: 3px; }
.thumb svg { display: block; width: 315px; }
.terrain { height: 315px; }
.osm { height: 184px; }
.place { font: 28px "DejaVu Sans", sans-serif; fill: #12123e; stroke: #fff; stroke-width: 5px; paint-order: stroke; }
.place .country { font-weight: bold; fill: #79601f; stroke: none; }
blockquote { height: 51px; margin-top: 8px; padding: 7px 0 0 15px; border-left: 3px solid #eee; font-size: 13px; line-height: 18px; }
.first { padding-left: 4px; }
.extent { margin: 7px 0 8px; padding-left: 30px; }
.extent + .thumb { margin-top: 0; }
.dates { margin-top: 7px; }
.ff { width: 10px; height: 8px; margin: 0 3px; }
.social { display: flex; gap: 3px; margin-top: 8px; }
.social span { display: flex; align-items: center; justify-content: center; width: 43px; height: 35px; border: 1px solid #ccc; border-radius: 3px; }
.social .b1 { width: 44px; }
.stars { display: flex; gap: 2.500px; margin: 7px 0 0 2px; padding-top: 2px; color: #777; }
.stars svg { width: 11px; height: 11px; }
```
